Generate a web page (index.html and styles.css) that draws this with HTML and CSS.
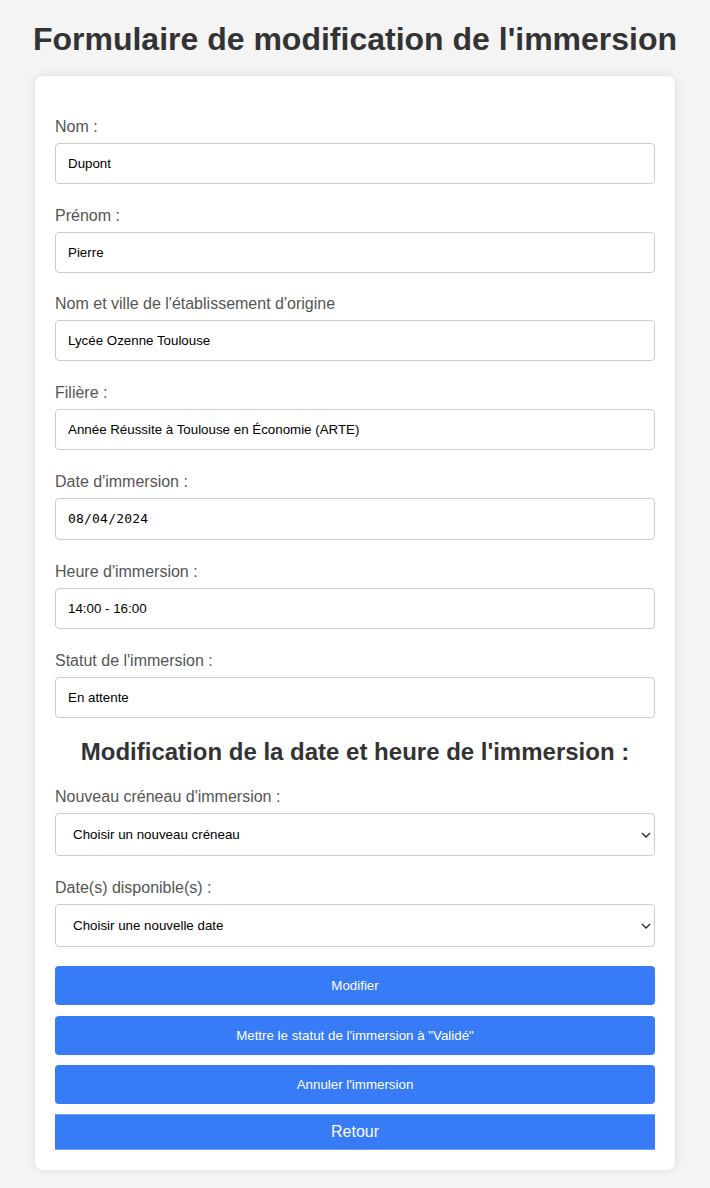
FILE: index.html
```html
<!DOCTYPE html>
<html lang="fr">
<head>
<meta charset="utf-8">
<title>Formulaire de modification de l'immersion</title>
<link rel="stylesheet" href="styles.css">
</head>
<body>
<h1 class="page-title">Formulaire de modification de l'immersion</h1>
<div class="card">
  <form class="form">
    <div class="field">
      <label class="label">Nom :</label>
      <input class="input" type="text" value="Dupont">
    </div>
    <div class="field">
      <label class="label">Prénom :</label>
      <input class="input" type="text" value="Pierre">
    </div>
    <div class="field">
      <label class="label">Nom et ville de l'établissement d'origine</label>
      <input class="input" type="text" value="Lycée Ozenne Toulouse">
    </div>
    <div class="field">
      <label class="label">Filière :</label>
      <input class="input" type="text" value="Année Réussite à Toulouse en Économie (ARTE)">
    </div>
    <div class="field">
      <label class="label">Date d'immersion :</label>
      <input class="input input-date" type="text" value="08/04/2024">
    </div>
    <div class="field">
      <label class="label">Heure d'immersion :</label>
      <input class="input" type="text" value="14:00 - 16:00">
    </div>
    <div class="field">
      <label class="label">Statut de l'immersion :</label>
      <input class="input" type="text" value="En attente">
    </div>

    <h2 class="section-title">Modification de la date et heure de l'immersion :</h2>

    <div class="field">
      <label class="label">Nouveau créneau d'immersion :</label>
      <div class="select-wrap">
        <select class="select"><option>Choisir un nouveau créneau</option></select>
        <svg class="chevron" width="10" height="6" viewBox="0 0 10 6"><path d="M1 1l4 4 4-4" fill="none" stroke="#222" stroke-width="1.3"/></svg>
      </div>
    </div>
    <div class="field">
      <label class="label">Date(s) disponible(s) :</label>
      <div class="select-wrap">
        <select class="select"><option>Choisir une nouvelle date</option></select>
        <svg class="chevron" width="10" height="6" viewBox="0 0 10 6"><path d="M1 1l4 4 4-4" fill="none" stroke="#222" stroke-width="1.3"/></svg>
      </div>
    </div>

    <div class="actions">
      <button type="button" class="btn">Modifier</button>
      <button type="button" class="btn">Mettre le statut de l'immersion à "Validé"</button>
      <button type="button" class="btn">Annuler l'immersion</button>
      <a class="btn-back" href="#">Retour</a>
    </div>
  </form>
</div>
</body>
</html>
```

FILE: styles.css
```css
html, body {
  margin: 0;
  padding: 0;
  background: #f4f4f4;
  font-family: "Liberation Sans", Arial, Helvetica, sans-serif;
}

.page-title {
  margin: 21px 0 18px;
  font-size: 32px;
  line-height: 37px;
  font-weight: bold;
  color: #333;
  text-align: center;
}

.card {
  width: 640px;
  box-sizing: border-box;
  margin: 0 auto 19px;
  padding: 0 20px 20px;
  background: #fff;
  border-radius: 8px;
  box-shadow: 0 0 8px rgba(0, 0, 0, 0.1);
}

.form {
  display: flex;
  flex-direction: column;
  padding-top: 19px;
}

.field {
  margin-top: 21.8px;
  display: flex;
  flex-direction: column;
}

.label {
  display: block;
  margin-bottom: 6px;
  font-size: 16px;
  line-height: 20px;
  color: #555;
}

.input {
  box-sizing: border-box;
  width: 100%;
  height: 41px;
  margin: 0;
  padding: 0 12px;
  border: 1px solid #ccc;
  border-radius: 4px;
  background: #fff;
  font-family: "Liberation Sans", Arial, Helvetica, sans-serif;
  font-size: 13.33px;
  color: #000;
  outline: none;
}

.input-date {
  height: 42px;
  font-family: "DejaVu Sans Mono", "Liberation Mono", monospace;
  font-size: 13px;
  letter-spacing: 0.2px;
}

.section-title {
  margin: 20px 0 0;
  font-size: 24px;
  line-height: 28px;
  font-weight: bold;
  color: #333;
  text-align: center;
}

.select-wrap {
  position: relative;
}

.select {
  box-sizing: border-box;
  width: 100%;
  height: 43px;
  margin: 0;
  padding: 0 12px 0 17px;
  border: 1px solid #ccc;
  border-radius: 4px;
  background: #fff;
  font-family: "Liberation Sans", Arial, Helvetica, sans-serif;
  font-size: 13.33px;
  color: #000;
  -webkit-appearance: none;
  appearance: none;
  outline: none;
}

.chevron {
  position: absolute;
  right: 4px;
  top: 19px;
}

.actions {
  margin-top: 19px;
  display: flex;
  flex-direction: column;
  gap: 10.4px;
}

.btn {
  box-sizing: border-box;
  width: 100%;
  height: 39px;
  margin: 0;
  padding: 0;
  border: none;
  border-radius: 4px;
  background: #377bf6;
  color: #fff;
  font-family: "Liberation Sans", Arial, Helvetica, sans-serif;
  font-size: 13.33px;
  cursor: pointer;
}

.btn-back {
  display: flex;
  align-items: center;
  justify-content: center;
  height: 36px;
  background: #377bf6;
  border-top: 1px solid #6c9ff8;
  border-bottom: 1px solid #6c9ff8;
  box-sizing: border-box;
  color: #fff;
  font-size: 16px;
  text-decoration: none;
}
```
